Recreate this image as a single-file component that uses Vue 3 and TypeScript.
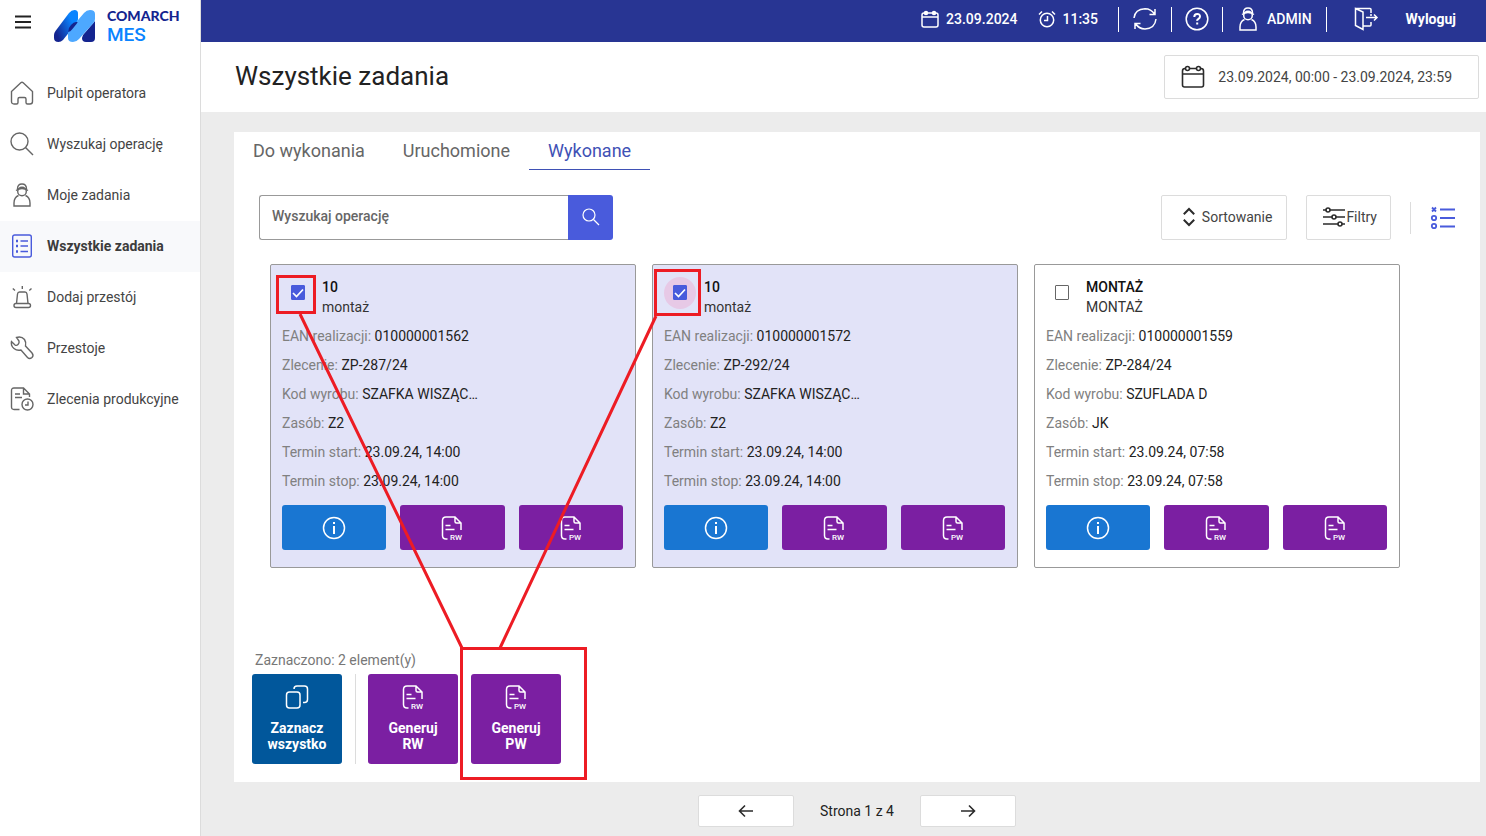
<script setup lang="ts">
import { ref, computed } from 'vue'

interface Task {
  id: number
  title: string
  subtitle: string
  selected: boolean
  ripple: boolean
  rows: { label: string; value: string }[]
}

const nav = [
  { id: 'home', label: 'Pulpit operatora' },
  { id: 'search', label: 'Wyszukaj operację' },
  { id: 'user', label: 'Moje zadania' },
  { id: 'list', label: 'Wszystkie zadania' },
  { id: 'siren', label: 'Dodaj przestój' },
  { id: 'wrench', label: 'Przestoje' },
  { id: 'orders', label: 'Zlecenia produkcyjne' },
]
const activeNav = ref('list')

const tabs = ['Do wykonania', 'Uruchomione', 'Wykonane']
const activeTab = ref('Wykonane')
const query = ref('')

function makeRows(ean: string, order: string, code: string, resource: string, date: string) {
  return [
    { label: 'EAN realizacji:', value: ean },
    { label: 'Zlecenie:', value: order },
    { label: 'Kod wyrobu:', value: code },
    { label: 'Zasób:', value: resource },
    { label: 'Termin start:', value: date },
    { label: 'Termin stop:', value: date },
  ]
}

const tasks = ref<Task[]>([
  {
    id: 1, title: '10', subtitle: 'montaż', selected: true, ripple: false,
    rows: makeRows('010000001562', 'ZP-287/24', 'SZAFKA WISZĄC…', 'Z2', '23.09.24, 14:00'),
  },
  {
    id: 2, title: '10', subtitle: 'montaż', selected: true, ripple: true,
    rows: makeRows('010000001572', 'ZP-292/24', 'SZAFKA WISZĄC…', 'Z2', '23.09.24, 14:00'),
  },
  {
    id: 3, title: 'MONTAŻ', subtitle: 'MONTAŻ', selected: false, ripple: false,
    rows: makeRows('010000001559', 'ZP-284/24', 'SZUFLADA D', 'JK', '23.09.24, 07:58'),
  },
])

const selectedCount = computed(() => tasks.value.filter((t) => t.selected).length)
const page = ref(1)
const pageCount = 4

function selectAll() {
  tasks.value.forEach((t) => (t.selected = true))
}
</script>

<template>
  <div class="app">
    <aside class="sidebar">
      <div class="brand">
        <button class="plain menu" type="button" aria-label="Menu">
          <svg width="16" height="14" viewBox="0 0 16 14" stroke="#222" stroke-width="2"><path d="M0 1.500h16M0 7h16M0 12.500h16" /></svg>
        </button>
        <svg class="mark" width="42" height="32" viewBox="0 0 42 32" aria-hidden="true">
          <defs>
            <linearGradient id="g1" x1="0" y1="0.8" x2="1" y2="0.2">
              <stop offset="0.1" stop-color="#14248f" /><stop offset="0.75" stop-color="#0a84ff" />
            </linearGradient>
          </defs>
          <path d="M41 11V28q0 4-4 4h-5q-4 0-4-4l1-3z" fill="#14248f" />
          <path d="M0 28V25q0-2 1.500-4L15 3Q17.500 0 20.500 0 24 0 24 3.500V9q0 2-1.500 4L9 30q-2 2-4.500 2Q0 32 0 28z" fill="url(#g1)" />
          <path d="M14 28V24q0-2 1.500-4L30 3q2.500-3 6-3 5 0 5 4v5q0 2-1.500 4L25 29q-2.500 3-6 3-5 0-5-4z" fill="#4da8ff" />
          <path d="M14.200 22Q14 18 17 15q2.500-3 5-3h1.500q.5 0-1 2L18 19.500Q16.500 21.500 14.200 22z" fill="#14248f" />
        </svg>
        <div class="brand-text"><span class="comarch">COMARCH</span><span class="mes">MES</span></div>
      </div>
      <nav class="nav">
        <a v-for="n in nav" :key="n.id" href="#" class="nav-item" :class="{ active: n.id === activeNav }" @click.prevent="activeNav = n.id">
          <svg class="ico" width="24" height="24" viewBox="0 0 24 24" aria-hidden="true">
            <path v-if="n.id === 'home'" d="M1.500 10.500 10.800 1.800q1.200-1 2.400 0l9.300 8.700V20.500q0 2.500-2.500 2.500H17.500q-1.500 0-1.500-1.500V18q0-1.500-1.500-1.500h-5Q8 16.500 8 18v3.500Q8 23 6.500 23H4q-2.500 0-2.500-2.500z" />
            <g v-else-if="n.id === 'search'"><circle cx="9.500" cy="9.500" r="8.500" /><path d="M15.500 15.500 23 23" /></g>
            <g v-else-if="n.id === 'user'">
              <path d="M7.500 6q0-5 4.500-5t4.500 5" /><path d="M6 7.500q6-4 12 0" /><circle cx="12" cy="8.500" r="4.300" />
              <path d="M8.500 12.500Q4 14.500 4 20v3h16v-3q0-5.500-4.500-7.500" />
            </g>
            <g v-else-if="n.id === 'list'">
              <rect x="2.700" y="1" width="18.600" height="22" rx="2" /><path d="M10.500 7H18M10.500 12H18M10.500 17.500H18" />
              <path d="M6 7h2M6 12h2M6 17.500h2" stroke-width="2.400" />
            </g>
            <g v-else-if="n.id === 'siren'">
              <path d="M6.500 18.500 7.500 9Q7.800 7 9.500 7h5.500q1.700 0 2 2l1 9.500" /><rect x="4" y="18.500" width="16.500" height="4" rx="2" />
              <path d="M12.300 1v3M2.800 3.500l2.200 2M21.500 3.500l-2.200 2" />
            </g>
            <path v-else-if="n.id === 'wrench'" d="M6.500 1.500q5-1.500 8 2 2 3 1 6.500l6.500 7q2 2.500 0 4.500-2.500 2-4.500 0l-6.500-7.500q-4 1-7-1.500Q.5 9.500 1.500 5.500L5 9q1.500 1 3-.5t1-3.500z" />
            <g v-else>
              <path d="M9.500 22.500H4q-2.500 0-2.500-2.500V3.500Q1.500 1 4 1h9.500l6 6v3M13.500 1v6h6M5 7h5M5 10.500h7" /><circle cx="17.500" cy="17.500" r="5.500" /><path d="M18 14.500v3.500h-3" />
            </g>
          </svg>
          <span>{{ n.label }}</span>
        </a>
      </nav>
    </aside>

    <div class="content">
      <header class="topbar">
        <span class="stat">
          <svg width="18" height="18" viewBox="0 0 18 18" class="line"><rect x="1" y="3" width="16" height="14" rx="2" /><path d="M1 7h16" /><circle cx="5" cy="3" r="1.500" fill="#fff" /><circle cx="13" cy="3" r="1.500" fill="#fff" /></svg>
          23.09.2024
        </span>
        <span class="stat clock">
          <svg width="18" height="18" viewBox="0 0 18 18" class="line"><circle cx="9" cy="10" r="6.700" /><path d="M9.500 6v4.500H6M1 4.500 4 1.500M17 4.500l-3-3" /></svg>
          11:35
        </span>
        <button class="plain cell refresh" type="button" aria-label="Odśwież">
          <svg width="24" height="24" viewBox="0 0 24 24" class="line"><path d="M1 11Q2 2 12 1.700q6 0 9.500 5.300M22 2v5.500h-5.500M23 12q-1 9.500-11 10-6 0-9.500-5.500M2 22v-5.500h5.500" /></svg>
        </button>
        <button class="plain cell" type="button" aria-label="Pomoc">
          <svg width="24" height="24" viewBox="0 0 24 24" class="line"><circle cx="12" cy="12" r="10.800" /><path d="M9.300 10q0-3 2.900-3t2.800 2.500q0 1.500-1.500 2.300t-1.300 2M12.200 15.500v2" stroke-width="2" /></svg>
        </button>
        <button class="plain cell admin" type="button">
          <svg width="20" height="24" viewBox="2 0 20 24" class="line">
            <path d="M7.500 6q0-5 4.500-5t4.500 5" /><path d="M6 7.500q6-4 12 0" /><circle cx="12" cy="8.500" r="4.300" /><path d="M8.500 12.500Q4 14.500 4 20v3h16v-3q0-5.500-4.500-7.500" />
          </svg>
          ADMIN
        </button>
        <button class="plain cell logout" type="button">
          <svg width="24" height="24" viewBox="0 0 24 24" class="line"><path d="M1.500 1.500 9 5v17.500l-7.500-4zM1.500 1.500H16q1 0 1 1V6M9 19h7q1 0 1-1v-3M12 10.500h11M20 7.500l3 3-3 3M17 7v2" /></svg>
          Wyloguj
        </button>
      </header>

      <div class="titlebar">
        <h1>Wszystkie zadania</h1>
        <button class="box range" type="button">
          <svg width="24" height="24" viewBox="0 0 24 24" class="dark"><path d="M4 3.500q-2.500 0-2.500 2.500v14q0 2 2 2h17q2 0 2-2V6q0-2.500-2.500-2.500M8.500 3.500h7M1.500 9h21" /><circle cx="6.500" cy="3.500" r="2" /><circle cx="17.500" cy="3.500" r="2" /></svg>
          23.09.2024, 00:00 - 23.09.2024, 23:59
        </button>
      </div>

      <main class="main">
        <section class="panel">
          <div class="tabs" role="tablist">
            <button v-for="t in tabs" :key="t" type="button" role="tab" class="plain tab" :class="{ active: t === activeTab }" :aria-selected="t === activeTab" @click="activeTab = t">{{ t }}</button>
          </div>

          <div class="toolbar">
            <form class="search" @submit.prevent>
              <input v-model="query" type="text" placeholder="Wyszukaj operację" aria-label="Wyszukaj operację" />
              <button class="plain" type="submit" aria-label="Szukaj">
                <svg width="18" height="18" viewBox="0 0 18 18" class="line thin"><circle cx="7" cy="7" r="6" /><path d="M11.500 11.500 17 17" /></svg>
              </button>
            </form>
            <div class="tools">
              <button class="box sort" type="button">
                <svg width="12" height="18" viewBox="0 0 12 18" class="dark sorticon"><path d="M.8 6.200 6 1l5.200 5.200M.8 11.800 6 17l5.200-5.200" /></svg>
                Sortowanie
              </button>
              <button class="box filter" type="button">
                <svg width="24" height="20" viewBox="0 0 24 20" class="dark"><path d="M1 3h3M8 3h15M1 10h9M14 10h9M1 17h15M20 17h3" /><circle cx="6" cy="3" r="2" /><circle cx="12" cy="10" r="2" /><circle cx="18" cy="17" r="2" /></svg>Filtry
              </button>
              <span class="rule"></span>
              <button class="plain view" type="button" aria-label="Widok listy">
                <svg width="24" height="24" viewBox="0 0 24 24" fill="none" stroke="#495bdc" stroke-width="1.800"><path d="M1 1.500l4 4M5 1.500l-4 4M9 3.500h15M9 12h15M9 20.500h15" /><circle cx="3" cy="12" r="2.200" /><circle cx="3" cy="20" r="2.200" /></svg>
              </button>
            </div>
          </div>

          <div class="cards">
            <article v-for="t in tasks" :key="t.id" class="card" :class="{ selected: t.selected }">
              <div class="head">
                <span class="check" :class="{ ripple: t.ripple }">
                  <input :id="'task' + t.id" v-model="t.selected" type="checkbox" />
                  <svg v-if="t.selected" width="12" height="12" viewBox="0 0 12 12"><path d="M1 6l3.500 3.500L11 2.500" fill="none" stroke="#fff" stroke-width="1.700" /></svg>
                </span>
                <label :for="'task' + t.id"><strong>{{ t.title }}</strong><span>{{ t.subtitle }}</span></label>
              </div>
              <dl>
                <div v-for="r in t.rows" :key="r.label"><dt>{{ r.label }}</dt>{{ ' ' }}<dd>{{ r.value }}</dd></div>
              </dl>
              <div class="actions">
                <button class="plain info" type="button" aria-label="Informacje">
                  <svg width="24" height="24" viewBox="0 0 24 24" class="line"><circle cx="12" cy="12" r="10.500" /><path d="M12 10v8M12 6v2" stroke-width="2" /></svg>
                </button>
                <button v-for="k in ['RW', 'PW']" :key="k" class="plain doc" type="button" :aria-label="'Generuj ' + k">
                  <svg width="24" height="24" viewBox="0 0 24 24" class="line"><path d="M7.500 23H6q-3.500 0-3.500-3.500v-15Q2.500 1 6 1h9l6 6v7M15 1v4.500Q15 7 16.500 7H21M5.500 9.500h5M5.500 13.500h9" /><text x="10" y="24">{{ k }}</text></svg>
                </button>
              </div>
            </article>
          </div>

          <div class="bulk">
            <p>Zaznaczono: {{ selectedCount }} element(y)</p>
            <div class="tiles">
              <button class="plain tile all" type="button" @click="selectAll">
                <svg width="24" height="24" viewBox="0 0 24 24" class="line"><rect x="1.500" y="7" width="13.500" height="16" rx="3" /><path d="M9 4q0-3 3-3h7.500q3 0 3 3v10.500q0 3-3 3H18" /></svg>
                <span>Zaznacz wszystko</span>
              </button>
              <span class="rule"></span>
              <button v-for="k in ['RW', 'PW']" :key="k" class="plain tile doc" type="button">
                <svg width="24" height="24" viewBox="0 0 24 24" class="line"><path d="M7.500 23H6q-3.500 0-3.500-3.500v-15Q2.500 1 6 1h9l6 6v7M15 1v4.500Q15 7 16.500 7H21M5.500 9.500h5M5.500 13.500h9" /><text x="10" y="24">{{ k }}</text></svg>
                <span>Generuj {{ k }}</span>
              </button>
            </div>
          </div>
        </section>

        <footer class="pager">
          <button class="box" type="button" aria-label="Poprzednia strona" @click="page = Math.max(1, page - 1)">
            <svg width="16" height="14" viewBox="0 0 16 14" class="dark"><path d="M15 7H1.500M7 1.500 1.500 7 7 12.500" /></svg>
          </button>
          <span>Strona {{ page }} z {{ pageCount }}</span>
          <button class="box" type="button" aria-label="Następna strona" @click="page = Math.min(pageCount, page + 1)">
            <svg width="16" height="14" viewBox="0 0 16 14" class="dark"><path d="M1 7h13.500M9 1.500 14.500 7 9 12.500" /></svg>
          </button>
        </footer>
      </main>
    </div>

    <svg class="callouts" aria-hidden="true">
      <rect x="277.500" y="276.500" width="37" height="36" />
      <rect x="655.500" y="270.500" width="44" height="44" />
      <rect x="461.500" y="648.500" width="124" height="130" />
      <path d="M300 314 462 648M656 316 500 648" />
    </svg>
  </div>
</template>

<style>
body {
  margin: 0;
}
</style>

<style scoped>
* {
  box-sizing: border-box;
}
.app {
  position: relative;
  display: flex;
  min-height: 100vh;
  background: #ececec;
  color: #444;
  font: 14px/20px Roboto, 'Liberation Sans', sans-serif;
}
svg {
  display: block;
  flex: none;
  overflow: visible;
}
button,
input {
  font: inherit;
}
button {
  cursor: pointer;
}
.plain {
  display: flex;
  align-items: center;
  justify-content: center;
  border: 0;
  padding: 0;
  background: none;
  color: inherit;
}
.box {
  display: flex;
  align-items: center;
  justify-content: center;
  border: 1px solid #dcdcdc;
  border-radius: 2px;
  padding: 0;
  background: #fff;
  color: #444;
}
.line {
  fill: none;
  stroke: #fff;
  stroke-width: 1.5;
}
.thin {
  stroke-width: 1.2;
}
.line text {
  fill: #fff;
  stroke: none;
  font: 500 8px Roboto, sans-serif;
}
.dark {
  fill: none;
  stroke: #2b2b2b;
  stroke-width: 1.6;
}
.sidebar {
  flex: 0 0 201px;
  border-right: 1px solid #dcdcdc;
  background: #fff;
}
.brand {
  display: flex;
  align-items: flex-start;
  height: 68px;
  padding: 10px 0 0 15px;
}
.menu {
  margin-top: 5px;
}
.mark {
  margin-left: 23px;
}
.brand-text {
  display: flex;
  flex-direction: column;
  margin: -3px 0 0 11px;
}
.comarch {
  color: #14248f;
  font: 900 14px/18px Lato, sans-serif;
}
.mes {
  color: #0a84ff;
  font-size: 19px;
  font-weight: 500;
  line-height: 19px;
}
.nav-item {
  display: flex;
  align-items: center;
  height: 51px;
  padding: 0 0 2px 10px;
  gap: 13px;
  color: #444;
  text-decoration: none;
}
.ico {
  fill: none;
  stroke: #666;
  stroke-width: 1.4;
}
.nav-item.active {
  background: #f8f9fb;
  color: #3c3c3c;
  font-weight: 700;
}
.active .ico {
  stroke: #495bdc;
}
.content {
  display: flex;
  flex: 1;
  flex-direction: column;
  min-width: 0;
}
.topbar {
  display: flex;
  align-items: center;
  justify-content: flex-end;
  height: 42px;
  padding: 0 30px 4px 0;
  background: #283593;
  color: #fff;
  font-weight: 500;
}
.stat {
  display: flex;
  align-items: center;
  gap: 7px;
}
.clock {
  margin: 0 20px;
}
.cell {
  height: 25px;
  border-left: 1px solid #fff;
  padding: 0 13px;
}
.refresh {
  padding: 0 14px;
}
.admin {
  gap: 9px;
  padding: 0 14px 0 15px;
}
.logout {
  gap: 28px;
  padding: 0 0 0 27px;
  font-weight: 700;
}
.titlebar {
  display: flex;
  align-items: center;
  justify-content: space-between;
  height: 70px;
  padding: 0 7px 0 34px;
  background: #fff;
}
h1 {
  margin: 0;
  padding-bottom: 2px;
  color: #222;
  font-size: 26px;
  font-weight: 400;
  line-height: 32px;
}
.range {
  height: 44px;
  padding: 0 26px 0 16px;
  gap: 13px;
}
.main {
  display: flex;
  flex: 1;
  flex-direction: column;
  padding: 20px 6px 9px 33px;
}
.panel {
  display: flex;
  flex: 1;
  flex-direction: column;
  background: #fff;
}
.tabs {
  display: flex;
}
.tab {
  height: 38px;
  border-bottom: 1px solid transparent;
  padding: 0 19px;
  color: #666;
  font-size: 18px;
}
.tab.active {
  border-color: #3f51b5;
  color: #3f51b5;
}
.toolbar {
  display: flex;
  justify-content: space-between;
  margin: 25px 25px 24px;
}
.search {
  display: flex;
  width: 354px;
  height: 45px;
}
.search input {
  flex: 1;
  min-width: 0;
  border: 1px solid #999;
  border-right: 0;
  border-radius: 3px 0 0 3px;
  padding: 0 12px 3px;
  color: #444;
  outline: none;
}
.search input::placeholder {
  color: #666;
  font-weight: 500;
  opacity: 1;
}
.search button {
  width: 45px;
  border-radius: 0 3px 3px 0;
  padding-bottom: 2px;
  background: #495bdc;
}
.tools {
  display: flex;
  align-items: center;
}
.tools .box {
  height: 45px;
}
.tools .sort {
  padding: 0 14px 1px 21px;
  gap: 7px;
}
.sorticon {
  stroke-width: 2;
}
.tools .filter {
  margin: 0 19px;
  padding: 0 13px 1px 15px;
}
.rule {
  width: 1px;
  height: 32px;
  background: #dcdcdc;
}
.view {
  margin-left: 20px;
}
.cards {
  display: grid;
  grid-template-columns: repeat(3, 1fr);
  gap: 16px;
  margin: 0 80px 24px 36px;
}
.card {
  border: 1px solid #999;
  border-radius: 2px;
  padding: 12px 12px 17px 11px;
  background: #fff;
}
.card.selected {
  background: #e2e3f8;
}
.head {
  display: flex;
}
.check {
  position: relative;
  display: grid;
  place-items: center;
  width: 32px;
  height: 32px;
  margin-right: 8px;
  border-radius: 50%;
  padding-bottom: 1px;
}
.check.ripple {
  background: #e7c9e6;
}
.check input {
  width: 14px;
  height: 15px;
  margin: 0;
  border: 1px solid #666;
  border-radius: 1px;
  background: #fff;
  appearance: none;
}
.check input:checked {
  border-color: #495bdc;
  background: #495bdc;
}
.check svg {
  position: absolute;
  top: 10px;
  left: 10px;
  pointer-events: none;
}
.head label {
  display: flex;
  flex-direction: column;
  color: #333;
}
.head strong {
  color: #111;
  font-weight: 500;
}
dl {
  margin: 5px 0 9px;
  line-height: 29px;
}
dt,
dd {
  display: inline;
  margin: 0;
}
dt {
  color: #808080;
}
dd {
  color: #222;
}
.actions {
  display: grid;
  grid-template-columns: repeat(3, 1fr);
  gap: 14px;
}
.actions button {
  height: 45px;
  border-radius: 3px;
}
.info {
  background: #1976d2;
}
.doc {
  background: #7b1fa2;
}
.bulk {
  margin-top: auto;
  padding: 0 18px 18px;
}
.bulk p {
  margin: 0 3px 4px;
  color: #777;
}
.tiles {
  display: flex;
  gap: 13px;
}
.tiles .rule {
  height: 90px;
  margin-right: -1px;
}
.tile {
  flex-direction: column;
  gap: 11px;
  width: 90px;
  height: 90px;
  border-radius: 3px;
  padding-bottom: 2px;
  color: #fff;
  font-weight: 700;
  line-height: 16px;
}
.tile span {
  width: 66px;
}
.all {
  background: #01579b;
}
.pager {
  display: flex;
  align-items: center;
  justify-content: center;
  gap: 26px;
  margin-top: 13px;
  color: #222;
}
.pager .box {
  width: 96px;
  height: 32px;
}
.callouts {
  position: absolute;
  inset: 0;
  width: 100%;
  height: 100%;
  fill: none;
  stroke: #ed1c24;
  stroke-width: 3;
  pointer-events: none;
}
</style>
